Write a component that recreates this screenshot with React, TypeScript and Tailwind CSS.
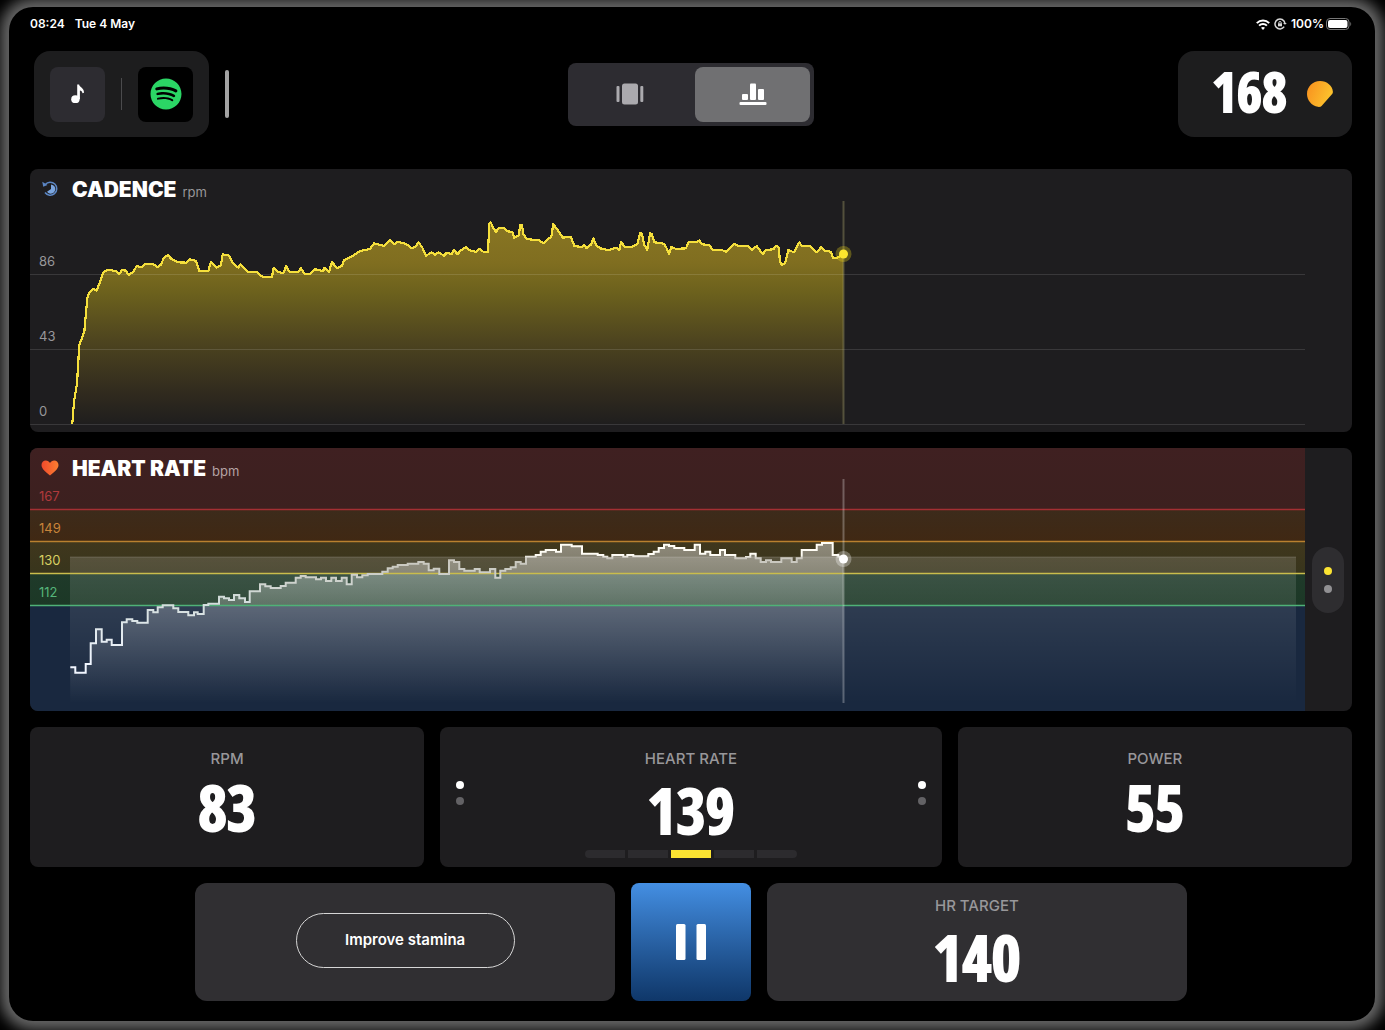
import { useState } from 'react';
import { FaSpotify } from 'react-icons/fa';

type Point = [number, number];

// Samples are recorded in thirds of a pixel and scaled down when drawn
const cadenceSamples: Point[] = [
  [217, 1271], [222, 1205], [231, 1150], [238, 1035], [253, 995], [262, 895], [267, 880], [280, 867],
  [290, 872], [302, 840], [310, 817], [322, 809], [348, 813], [358, 823], [366, 810], [378, 812], [386, 825],
  [400, 815], [410, 798], [425, 802], [435, 791], [460, 792], [472, 802], [482, 795], [492, 773],
  [504, 766], [515, 778], [535, 787], [560, 788], [570, 778], [588, 783], [598, 813], [625, 813],
  [633, 785], [650, 803], [663, 795], [668, 763], [688, 767], [697, 788], [715, 803], [722, 793],
  [745, 817], [770, 815], [787, 830], [816, 830], [821, 803], [832, 815], [850, 820], [858, 798],
  [868, 815], [895, 815], [903, 805], [915, 823], [930, 823], [945, 808], [970, 813], [972, 803],
  [987, 815], [996, 787], [1012, 805], [1025, 798], [1033, 780], [1060, 767], [1080, 753], [1110, 747],
  [1122, 730], [1152, 738], [1170, 719], [1182, 733], [1195, 725], [1220, 733], [1235, 745], [1248, 738],
  [1256, 727], [1268, 745], [1278, 767], [1295, 757], [1305, 765], [1315, 757], [1332, 767], [1340, 758],
  [1355, 762], [1362, 750], [1372, 763], [1382, 752], [1398, 741], [1412, 753], [1428, 755], [1438, 747],
  [1450, 755], [1464, 757], [1468, 670], [1472, 667], [1480, 683], [1488, 697], [1496, 683], [1512, 683],
  [1520, 693], [1538, 697], [1542, 713], [1556, 707], [1561, 675], [1566, 675], [1570, 703], [1580, 717],
  [1598, 719], [1616, 721], [1632, 730], [1642, 718], [1654, 710], [1660, 673], [1672, 688], [1688, 713],
  [1712, 710], [1723, 738], [1745, 741], [1752, 735], [1760, 745], [1774, 733], [1780, 715], [1788, 735],
  [1800, 745], [1825, 750], [1850, 743], [1858, 750], [1863, 727], [1875, 740], [1895, 740], [1912, 733],
  [1920, 700], [1926, 701], [1932, 733], [1942, 750], [1950, 700], [1956, 703], [1963, 727], [1992, 731],
  [2000, 745], [2007, 763], [2014, 740], [2028, 747], [2058, 745], [2065, 727], [2090, 727], [2098, 721],
  [2106, 733], [2126, 735], [2140, 750], [2165, 750], [2178, 755], [2192, 743], [2202, 731], [2215, 738],
  [2242, 737], [2255, 750], [2270, 738], [2288, 762], [2298, 750], [2320, 748], [2328, 737], [2336, 743],
  [2340, 785], [2346, 795], [2356, 788], [2365, 750], [2382, 757], [2398, 727], [2405, 737], [2428, 737],
  [2450, 757], [2463, 742], [2475, 752], [2492, 755], [2500, 775], [2512, 773], [2530, 763],
];

const heartSamples: Point[] = [
  [211, 2002], [226, 2018], [257, 1992], [272, 1930], [288, 1888], [305, 1925], [320, 1919], [335, 1935],
  [366, 1867], [380, 1858], [397, 1863], [412, 1868], [443, 1830], [460, 1837], [473, 1822], [488, 1816],
  [520, 1825], [535, 1836], [565, 1846], [582, 1837], [593, 1842], [611, 1815], [625, 1811], [657, 1790],
  [672, 1795], [687, 1800], [702, 1785], [718, 1795], [735, 1806], [749, 1774], [780, 1753], [796, 1759],
  [812, 1764], [842, 1758], [857, 1748], [887, 1733], [902, 1728], [917, 1732], [948, 1738], [963, 1733],
  [978, 1743], [994, 1733], [1008, 1743], [1025, 1733], [1040, 1753], [1055, 1724], [1071, 1732],
  [1087, 1726], [1103, 1722], [1147, 1715], [1163, 1705], [1178, 1700], [1193, 1695], [1223, 1691],
  [1255, 1686], [1271, 1691], [1286, 1711], [1301, 1706], [1318, 1722], [1347, 1681], [1362, 1686],
  [1378, 1707], [1393, 1712], [1424, 1707], [1439, 1717], [1470, 1707], [1486, 1733], [1501, 1712],
  [1516, 1707], [1532, 1702], [1547, 1686], [1562, 1691], [1578, 1670], [1607, 1665], [1622, 1655],
  [1637, 1650], [1668, 1655], [1683, 1634], [1715, 1639], [1746, 1661], [1793, 1665], [1810, 1670],
  [1822, 1675], [1837, 1665], [1870, 1670], [1882, 1665], [1900, 1669], [1945, 1662], [1961, 1655],
  [1976, 1644], [1992, 1634], [2007, 1638], [2023, 1644], [2053, 1650], [2084, 1634], [2100, 1661],
  [2116, 1655], [2131, 1665], [2160, 1650], [2175, 1665], [2206, 1675], [2238, 1671], [2251, 1661],
  [2267, 1675], [2282, 1686], [2298, 1681], [2313, 1686], [2344, 1675], [2375, 1686], [2390, 1675],
  [2405, 1650], [2450, 1634], [2466, 1629], [2498, 1665], [2515, 1670], [2530, 1676],
];

const linePath = (points: Point[]) =>
  points.map(([x, y], i) => `${i ? 'L' : 'M'}${(x / 3).toFixed(1)} ${(y / 3).toFixed(1)}`).join('');

const stepPath = (points: Point[]) =>
  points
    .map(([x, y], i) =>
      i ? `H${(x / 3).toFixed(1)}V${(y / 3).toFixed(1)}` : `M${(x / 3).toFixed(1)} ${(y / 3).toFixed(1)}`
    )
    .join('');

const zones = [
  { label: '167', top: 448, bottom: 509, from: '#3f2021', to: '#3c201f', line: '#a32f33', text: '#b03a3c' },
  { label: '149', top: 509, bottom: 541, from: '#3c2b1b', to: '#402813', line: '#b9802f', text: '#c9843a' },
  { label: '130', top: 541, bottom: 573, from: '#40371d', to: '#38351c', line: '#c9bd4c', text: '#d8cf62' },
  { label: '112', top: 573, bottom: 605, from: '#1f3a2a', to: '#1c3826', line: '#4fb277', text: '#55b57a' },
];

const StatusBar = () => (
  <div className="flex h-4 items-center justify-between text-xs font-semibold leading-4">
    <div className="flex gap-2.5">
      <span>08:24</span>
      <span>Tue 4 May</span>
    </div>
    <div className="flex items-center gap-1">
      <svg width="14" height="11" viewBox="0 0 14 11" fill="none" stroke="white" strokeWidth="2" aria-hidden="true">
        <path d="M.8 4.1C4.2.6 9.8.6 13.2 4.1" />
        <path d="M3.1 6.6c2.200-2.200 5.600-2.200 7.800 0" />
        <path d="M7 10.9 5 8.8c1.1-1.1 2.9-1.1 4 0z" fill="white" stroke="none" />
      </svg>
      <svg width="13" height="12" viewBox="0 0 13 12" fill="none" stroke="#d8d8d8" strokeWidth="1.5" aria-hidden="true">
        <path d="M10.2 8.7A5 5 0 1 1 10.9 5" />
        <path d="m9 5 2 1.8L12.8 5z" fill="#d8d8d8" stroke="none" />
        <rect x="4" y="5.3" width="4" height="3" fill="#d8d8d8" stroke="none" />
        <path d="M4.8 5.5v-.8a1.2 1.2 0 0 1 2.4 0v.8" strokeWidth="1" />
      </svg>
      <div className="flex items-center gap-0.5">
        <span>100%</span>
        <svg width="26" height="12" viewBox="0 0 26 12" aria-hidden="true">
          <rect x=".5" y=".5" width="22.5" height="11" rx="3.5" fill="none" stroke="#777" />
          <rect x="2" y="2" width="19.5" height="8" rx="2" fill="white" />
          <path d="M24.3 4v4c1.2-.4 1.2-3.6 0-4z" fill="#777" />
        </svg>
      </div>
    </div>
  </div>
);

const Header = () => {
  const [view, setView] = useState('charts');

  return (
    <header className="mt-[19px] grid grid-cols-[1fr_auto_1fr] items-center">
      <div className="flex items-center gap-4 pl-1">
        <div className="flex h-[86px] items-center gap-4 rounded-2xl bg-[#1d1d1e] px-4">
          <button aria-label="Music" className="flex size-[55px] items-center justify-center rounded-lg bg-[#2d2c31]">
            <svg width="14" height="20" viewBox="0 0 14 20" fill="white" aria-hidden="true">
              <ellipse cx="4.4" cy="15.2" rx="4.2" ry="3.9" />
              <path d="M6.2 15V.6h1.9c.3 3 5.100 3.200 4.900 8.200l-1.500.4c-.2-1.800-1.300-2.400-2.600-2.800V15z" />
            </svg>
          </button>
          <span className="h-8 w-px bg-[#4b4b4d]" />
          <button aria-label="Spotify" className="flex size-[55px] items-center justify-center rounded-lg bg-black">
            <FaSpotify className="size-8 text-[#2bd565]" />
          </button>
        </div>
        <span className="h-12 w-1 rounded-full bg-[#a3a3a3]" />
      </div>

      <div className="flex gap-2 rounded-lg bg-[#2d2c31] p-1">
        <button
          aria-label="Cards"
          onClick={() => setView('cards')}
          className={`flex h-[55px] w-[115px] items-center justify-center rounded-lg ${view === 'cards' ? 'bg-[#707072]' : ''}`}
        >
          <svg width="28" height="22" viewBox="0 0 28 22" fill="#abaaae" aria-hidden="true">
            <rect x="0.5" y="3" width="3" height="16" rx="1" />
            <rect x="6" y="0.5" width="16" height="21" rx="2.5" />
            <rect x="24.3" y="3" width="3" height="16" rx="1" />
          </svg>
        </button>
        <button
          aria-label="Charts"
          onClick={() => setView('charts')}
          className={`flex h-[55px] w-[115px] items-center justify-center rounded-lg ${view === 'charts' ? 'bg-[#707072]' : ''}`}
        >
          <svg width="28" height="22" viewBox="0 0 28 22" fill="white" aria-hidden="true">
            <rect x="3" y="11" width="6" height="6" rx="1" />
            <rect x="11" y="0.5" width="6" height="16.500" rx="1" />
            <rect x="19" y="6" width="6" height="11" rx="1" />
            <rect x="0.5" y="19" width="27" height="3" rx="1" />
          </svg>
        </button>
      </div>

      <div className="flex h-[86px] w-[174px] items-center justify-end gap-5 justify-self-end rounded-2xl bg-[#1d1d1e] pr-[19px]">
        <span className="pb-1.5 font-['Noto_Sans_ExtraCondensed','Open_Sans_Condensed','Roboto_Condensed','Liberation_Sans_Narrow',sans-serif] text-[54px] font-black leading-[60px] [-webkit-text-stroke:2px_white]">
          168
        </span>
        <svg width="26" height="26" viewBox="0 0 26 26" aria-hidden="true">
          <defs>
            <linearGradient id="coin" x1="0" x2="1" y1="0.2" y2="0.6">
              <stop offset="0" stopColor="#f8921f" />
              <stop offset="1" stopColor="#fdc62e" />
            </linearGradient>
          </defs>
          <path
            fill="url(#coin)"
            d="M13 0C20 0 25.6 4.8 25.9 10.8c0 1.2-.4 2-1.2 2.8L14.8 24.8c-1 1.2-2.4 1.4-3.8 1C4.500 24.500 0 19.500 0 13 0 5.800 5.800 0 13 0z"
          />
        </svg>
      </div>
    </header>
  );
};

const CadencePanel = () => (
  <section className="mt-8 grid overflow-hidden rounded-lg bg-[#1e1d1f]">
    <svg viewBox="30 169 1322 263" className="col-start-1 row-start-1 block w-full" role="img" aria-label="Cadence">
      <defs>
        <linearGradient id="cadenceFill" gradientUnits="userSpaceOnUse" x1="0" y1="222" x2="0" y2="424">
          <stop offset="0" stopColor="#897623" />
          <stop offset="0.2" stopColor="#806e20" />
          <stop offset="0.35" stopColor="#6c611d" />
          <stop offset="0.6" stopColor="#4c431f" />
          <stop offset="0.85" stopColor="#302a1e" />
          <stop offset="1" stopColor="#1f1e1e" />
        </linearGradient>
      </defs>
      <path d={`${linePath(cadenceSamples)}V424H72z`} fill="url(#cadenceFill)" />
      <path d="M30 274.500H1305M30 349.500H1305M30 424.500H1305" stroke="white" strokeOpacity="0.12" />
      <rect x="842.5" y="201" width="2" height="223" fill="#c5bd7a" fillOpacity="0.32" />
      <path
        d={linePath(cadenceSamples)}
        fill="none"
        stroke="#f5df3c"
        strokeWidth="2.2"
        strokeLinejoin="round"
        shapeRendering="crispEdges"
      />
      <circle cx="843.500" cy="254" r="8" fill="#f5df1c" fillOpacity="0.3" />
      <circle cx="843.500" cy="254" r="4.500" fill="#fbe62e" />
      <g fill="#98979a" fontSize="13">
        <text x="39" y="266">86</text>
        <text x="39" y="341">43</text>
        <text x="39" y="416">0</text>
      </g>
    </svg>
    <div className="col-start-1 row-start-1 flex items-start gap-3 self-start px-3 pt-[9px]">
      <svg width="18" height="18" viewBox="0 0 18 18" fill="none" className="mt-0.5" aria-hidden="true">
        <path d="M3.300 4.500A6.500 6.500 0 1 1 3 12.500" stroke="#5b86c4" strokeWidth="1.500" />
        <path d="M.3 1.800 1.200 6.800 5.500 5z" fill="#5b86c4" />
        <path d="M9 4.500v4.600l-4 2.700a4.600 4.600 0 1 0 4-7.300z" fill="#7ba6e0" />
      </svg>
      <h2 className="text-[21px] font-black leading-6">
        CADENCE<span className="ml-1.5 text-[13px] font-normal text-[#98979a]">rpm</span>
      </h2>
    </div>
  </section>
);

const HeartRatePanel = () => (
  <section className="mt-4 grid overflow-hidden rounded-lg bg-[#1e1d1f]">
    <svg viewBox="30 448 1322 263" className="col-start-1 row-start-1 block w-full" role="img" aria-label="Heart rate">
      <defs>
        {zones.map((zone) => (
          <linearGradient key={zone.label} id={`zone${zone.label}`} x1="0" y1="0" x2="0" y2="1">
            <stop offset="0" stopColor={zone.from} />
            <stop offset="1" stopColor={zone.to} />
          </linearGradient>
        ))}
        <linearGradient id="target" x1="0" y1="0" x2="0" y2="1">
          <stop offset="0" stopColor="white" stopOpacity="0.14" />
          <stop offset="1" stopColor="white" stopOpacity="0" />
        </linearGradient>
        <linearGradient id="heartFill" gradientUnits="userSpaceOnUse" x1="0" y1="542" x2="0" y2="703">
          <stop offset="0" stopColor="white" stopOpacity="0.42" />
          <stop offset="0.4" stopColor="white" stopOpacity="0.22" />
          <stop offset="1" stopColor="white" stopOpacity="0" />
        </linearGradient>
        <linearGradient id="heartLine" gradientUnits="userSpaceOnUse" x1="0" y1="542" x2="0" y2="675">
          <stop offset="0.1" stopColor="#fffdf5" />
          <stop offset="0.12" stopColor="#c9c6bd" />
          <stop offset="0.45" stopColor="#d2dcdb" />
          <stop offset="0.9" stopColor="#f1f6ff" />
        </linearGradient>
        <linearGradient id="heartIcon" x1="0" y1="0" x2="1" y2="0">
          <stop offset="0" stopColor="#f04a2c" />
          <stop offset="1" stopColor="#fb7f31" />
        </linearGradient>
      </defs>
      <rect x="30" y="605" width="1275" height="106" fill="#19283f" />
      {zones.map((zone) => (
        <rect
          key={zone.label}
          x="30"
          y={zone.top}
          width="1275"
          height={zone.bottom - zone.top}
          fill={`url(#zone${zone.label})`}
        />
      ))}
      <rect x="70" y="557" width="1226" height="146" fill="url(#target)" />
      <path d="M70 557H1296" stroke="white" strokeOpacity="0.16" />
      <path d={`${stepPath(heartSamples)}V703H70.300z`} fill="url(#heartFill)" />
      <g fontSize="13">
        {zones.map((zone) => (
          <g key={zone.label}>
            <path d={`M30 ${zone.bottom + 0.5}H1305`} stroke={zone.line} strokeWidth="1.300" />
            <text x="39" y={zone.bottom - 8} fill={zone.text}>{zone.label}</text>
          </g>
        ))}
      </g>
      <path d={stepPath(heartSamples)} fill="none" stroke="url(#heartLine)" strokeWidth="2" />
      <rect x="842.500" y="479" width="2" height="224" fill="white" fillOpacity="0.28" />
      <circle cx="843.500" cy="559" r="8" fill="white" fillOpacity="0.3" />
      <circle cx="843.500" cy="559" r="4.500" fill="white" />
    </svg>
    <div className="col-start-1 row-start-1 flex items-start gap-3 self-start px-3 pt-[9px]">
      <svg width="18" height="18" viewBox="0 0 18 18" className="mt-0.5 overflow-visible" aria-hidden="true">
        <path
          fill="url(#heartIcon)"
          d="M8 16.500C4 13.200-.5 10-.5 6-.5 3.300 1.400 1.500 3.800 1.500c1.800 0 3.300.9 4.200 2.500.9-1.600 2.400-2.500 4.200-2.500 2.400 0 4.300 1.800 4.300 4.500C16.500 10 12 13.200 8 16.500z"
        />
      </svg>
      <h2 className="text-[21px] font-black leading-6">
        HEART RATE<span className="ml-1.5 text-[13px] font-normal text-[#b5a3a4]">bpm</span>
      </h2>
    </div>
    <div className="col-start-1 row-start-1 mr-2 flex h-[66px] w-8 flex-col items-center justify-center gap-2.5 self-center justify-self-end rounded-full bg-[#2e2d30]">
      <span className="size-2 rounded-full bg-[#fbe332]" />
      <span className="size-2 rounded-full bg-[#919093]" />
    </div>
  </section>
);

const Dots = () => (
  <div className="flex flex-col gap-2">
    <span className="size-2 rounded-full bg-white" />
    <span className="size-2 rounded-full bg-[#636265]" />
  </div>
);

const Metric = ({ label, value, spaced }: { label: string; value: string; spaced?: boolean }) => (
  <div className={`flex flex-col items-center ${spaced ? 'gap-[3px]' : ''}`}>
    <span className="text-[15px] font-medium leading-5 text-[#98979a]">{label}</span>
    <span className="font-['Noto_Sans_ExtraCondensed','Open_Sans_Condensed','Roboto_Condensed','Liberation_Sans_Narrow',sans-serif] text-[63px] font-black leading-[76px] [-webkit-text-stroke:2px_white]">
      {value}
    </span>
  </div>
);

const App = () => {
  return (
    <div className="min-h-screen bg-black pb-[9px] pl-[9px] pr-[10px] pt-[7px] font-['Inter',sans-serif] text-white">
      <main className="rounded-3xl bg-black pb-5 pl-[21px] pr-[23px] pt-[9px] shadow-[0_0_14px_9px_#666]">
        <StatusBar />
        <Header />
        <CadencePanel />
        <HeartRatePanel />

        <div className="mt-4 grid grid-cols-[11fr_14fr_11fr] gap-4">
          <section className="h-[140px] rounded-lg bg-[#1e1d1f] pt-[22px]">
            <Metric label="RPM" value="83" />
          </section>
          <section className="flex h-[140px] items-start justify-between rounded-lg bg-[#1e1d1f] px-4 pt-[22px]">
            <div className="pt-8">
              <Dots />
            </div>
            <div className="flex flex-col items-center">
              <Metric label="HEART RATE" value="139" spaced />
              <div className="mt-0.5 flex gap-[3px]">
                <span className="h-2 w-10 rounded-l-sm bg-[#2c2b2e]" />
                <span className="h-2 w-10 bg-[#2c2b2e]" />
                <span className="h-2 w-10 bg-[#fbe332]" />
                <span className="h-2 w-10 bg-[#2c2b2e]" />
                <span className="h-2 w-10 rounded-r-sm bg-[#2c2b2e]" />
              </div>
            </div>
            <div className="pt-8">
              <Dots />
            </div>
          </section>
          <section className="h-[140px] rounded-lg bg-[#1e1d1f] pt-[22px]">
            <Metric label="POWER" value="55" />
          </section>
        </div>

        <div className="mx-auto mt-4 flex h-[118px] w-3/4 gap-4">
          <section className="flex flex-1 items-center justify-center rounded-xl bg-[#302f32] pb-1">
            <button className="h-[55px] w-[219px] rounded-full border border-[#d6d6d6] text-[15px] font-semibold">
              Improve stamina
            </button>
          </section>
          <button
            aria-label="Pause"
            className="flex w-[120px] items-center justify-center rounded-lg bg-linear-to-b from-[#448fe3] to-[#0f3769]"
          >
            <svg width="30" height="36" viewBox="0 0 30 36" fill="white" aria-hidden="true">
              <rect x="0" y="0" width="9.500" height="36" rx="1.500" />
              <rect x="20.500" y="0" width="9.500" height="36" rx="1.500" />
            </svg>
          </button>
          <section className="flex-1 rounded-xl bg-[#302f32] pt-[13px]">
            <Metric label="HR TARGET" value="140" spaced />
          </section>
        </div>
      </main>
    </div>
  );
};

export default App;
